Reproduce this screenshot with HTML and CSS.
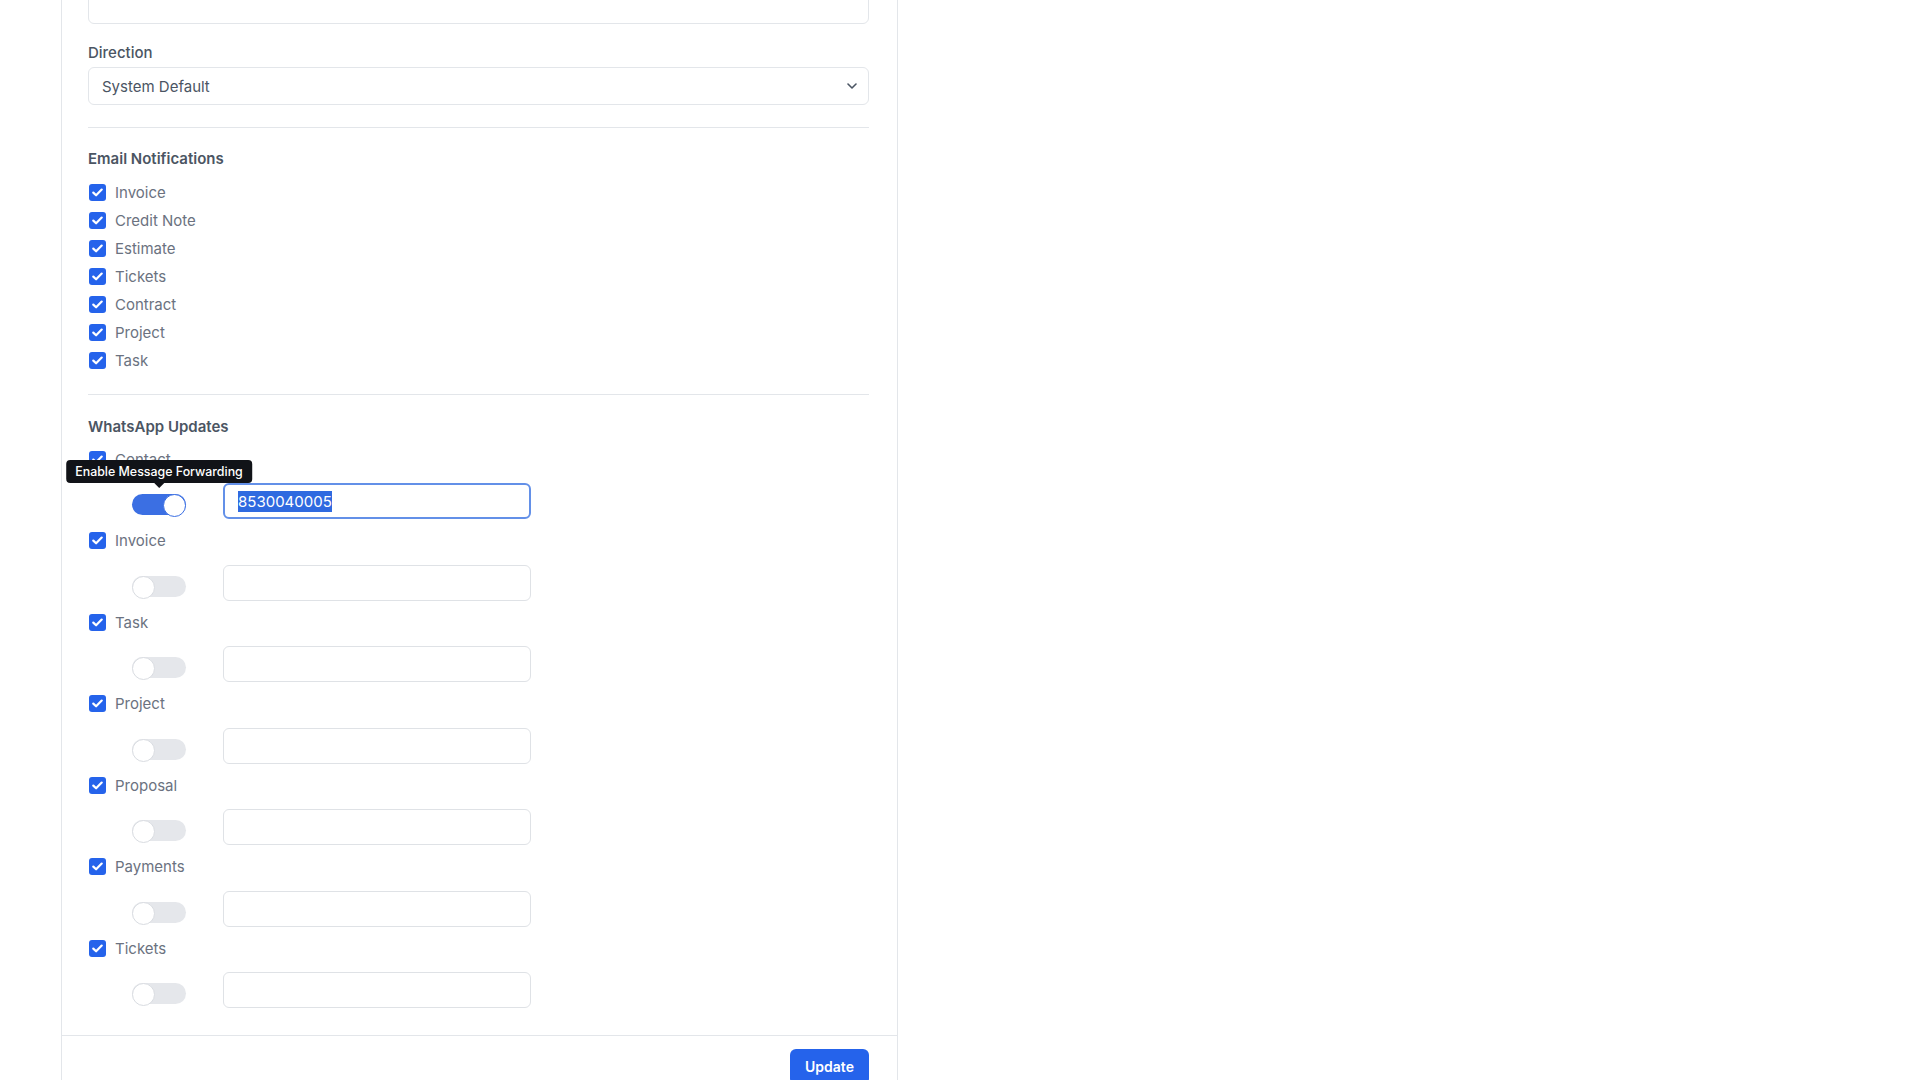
FILE: index.html
```html
<!DOCTYPE html>
<html lang="en">
<head>
    <meta charset="UTF-8">
    <meta name="viewport" content="width=device-width, initial-scale=1.0">
    <title>Profile Settings</title>
    <link rel="stylesheet" href="styles.css">
</head>
<body>
    <div class="page">
        <div class="panel">
            <div class="panel-body">
                <!-- field above, scrolled out of view -->
                <div class="form-group">
                    <div class="form-control"></div>
                </div>

                <div class="form-group">
                    <label class="control-label">Direction</label>
                    <div class="form-control select">
                        <span>System Default</span>
                        <svg class="chevron" width="10" height="6" viewBox="0 0 10 6"><path d="M1 1l4 4 4-4" fill="none" stroke="#4b5563" stroke-width="1.6" stroke-linecap="round" stroke-linejoin="round"/></svg>
                    </div>
                </div>

                <hr>

                <h4 class="section-title">Email Notifications</h4>
                <div class="check-list">
                    <div class="check"><span class="box"><svg width="11" height="9" viewBox="0 0 11 9"><path d="M1.3 4.6l2.8 2.7L9.7 1.6" fill="none" stroke="#fff" stroke-width="2.2" stroke-linecap="round" stroke-linejoin="round"/></svg></span>Invoice</div>
                    <div class="check"><span class="box"><svg width="11" height="9" viewBox="0 0 11 9"><path d="M1.3 4.6l2.8 2.7L9.7 1.6" fill="none" stroke="#fff" stroke-width="2.2" stroke-linecap="round" stroke-linejoin="round"/></svg></span>Credit Note</div>
                    <div class="check"><span class="box"><svg width="11" height="9" viewBox="0 0 11 9"><path d="M1.3 4.6l2.8 2.7L9.7 1.6" fill="none" stroke="#fff" stroke-width="2.2" stroke-linecap="round" stroke-linejoin="round"/></svg></span>Estimate</div>
                    <div class="check"><span class="box"><svg width="11" height="9" viewBox="0 0 11 9"><path d="M1.3 4.6l2.8 2.7L9.7 1.6" fill="none" stroke="#fff" stroke-width="2.2" stroke-linecap="round" stroke-linejoin="round"/></svg></span>Tickets</div>
                    <div class="check"><span class="box"><svg width="11" height="9" viewBox="0 0 11 9"><path d="M1.3 4.6l2.8 2.7L9.7 1.6" fill="none" stroke="#fff" stroke-width="2.2" stroke-linecap="round" stroke-linejoin="round"/></svg></span>Contract</div>
                    <div class="check"><span class="box"><svg width="11" height="9" viewBox="0 0 11 9"><path d="M1.3 4.6l2.8 2.7L9.7 1.6" fill="none" stroke="#fff" stroke-width="2.2" stroke-linecap="round" stroke-linejoin="round"/></svg></span>Project</div>
                    <div class="check"><span class="box"><svg width="11" height="9" viewBox="0 0 11 9"><path d="M1.3 4.6l2.8 2.7L9.7 1.6" fill="none" stroke="#fff" stroke-width="2.2" stroke-linecap="round" stroke-linejoin="round"/></svg></span>Task</div>
                </div>

                <hr class="hr-tight">

                <h4 class="section-title wa-title">WhatsApp Updates</h4>
                <div class="wa-list">
                    <div class="wa-item">
                        <div class="check"><span class="box"><svg width="11" height="9" viewBox="0 0 11 9"><path d="M1.3 4.6l2.8 2.7L9.7 1.6" fill="none" stroke="#fff" stroke-width="2.2" stroke-linecap="round" stroke-linejoin="round"/></svg></span>Contact</div>
                        <div class="forward-row">
                            <span class="switch on">
                                <span class="tooltip">Enable Message Forwarding</span>
                            </span>
                            <div class="phone-input focused"><span class="selected">8530040005</span></div>
                        </div>
                    </div>
                    <div class="wa-item">
                        <div class="check"><span class="box"><svg width="11" height="9" viewBox="0 0 11 9"><path d="M1.3 4.6l2.8 2.7L9.7 1.6" fill="none" stroke="#fff" stroke-width="2.2" stroke-linecap="round" stroke-linejoin="round"/></svg></span>Invoice</div>
                        <div class="forward-row">
                            <span class="switch"></span>
                            <div class="phone-input"></div>
                        </div>
                    </div>
                    <div class="wa-item">
                        <div class="check"><span class="box"><svg width="11" height="9" viewBox="0 0 11 9"><path d="M1.3 4.6l2.8 2.7L9.7 1.6" fill="none" stroke="#fff" stroke-width="2.2" stroke-linecap="round" stroke-linejoin="round"/></svg></span>Task</div>
                        <div class="forward-row">
                            <span class="switch"></span>
                            <div class="phone-input"></div>
                        </div>
                    </div>
                    <div class="wa-item">
                        <div class="check"><span class="box"><svg width="11" height="9" viewBox="0 0 11 9"><path d="M1.3 4.6l2.8 2.7L9.7 1.6" fill="none" stroke="#fff" stroke-width="2.2" stroke-linecap="round" stroke-linejoin="round"/></svg></span>Project</div>
                        <div class="forward-row">
                            <span class="switch"></span>
                            <div class="phone-input"></div>
                        </div>
                    </div>
                    <div class="wa-item">
                        <div class="check"><span class="box"><svg width="11" height="9" viewBox="0 0 11 9"><path d="M1.3 4.6l2.8 2.7L9.7 1.6" fill="none" stroke="#fff" stroke-width="2.2" stroke-linecap="round" stroke-linejoin="round"/></svg></span>Proposal</div>
                        <div class="forward-row">
                            <span class="switch"></span>
                            <div class="phone-input"></div>
                        </div>
                    </div>
                    <div class="wa-item">
                        <div class="check"><span class="box"><svg width="11" height="9" viewBox="0 0 11 9"><path d="M1.3 4.6l2.8 2.7L9.7 1.6" fill="none" stroke="#fff" stroke-width="2.2" stroke-linecap="round" stroke-linejoin="round"/></svg></span>Payments</div>
                        <div class="forward-row">
                            <span class="switch"></span>
                            <div class="phone-input"></div>
                        </div>
                    </div>
                    <div class="wa-item">
                        <div class="check"><span class="box"><svg width="11" height="9" viewBox="0 0 11 9"><path d="M1.3 4.6l2.8 2.7L9.7 1.6" fill="none" stroke="#fff" stroke-width="2.2" stroke-linecap="round" stroke-linejoin="round"/></svg></span>Tickets</div>
                        <div class="forward-row">
                            <span class="switch"></span>
                            <div class="phone-input"></div>
                        </div>
                    </div>
                </div>
            </div>

            <div class="panel-footer">
                <button type="submit" class="btn-primary">Update</button>
            </div>
        </div>
    </div>
</body>
</html>
```

FILE: styles.css
```css
/* base */
:root {
    --blue: #2563eb;
    --border: #e3e6ea;
    --text: #6b7280;
    --heading: #4b5563;
}

* {
    box-sizing: border-box;
}

body {
    margin: 0;
    font-family: Inter, 'Noto Sans', sans-serif;
    font-size: 15px;
    color: var(--text);
    background: #fff;
    overflow: hidden;
}

.page {
    padding-left: 61px;
}

/* panel */
.panel {
    width: 837px;
    margin-top: -40px;
    border: 1px solid var(--border);
    border-radius: 6px;
    background: #fff;
}

.panel-body {
    padding: 25px 28px 19px 26px;
}

.panel-footer {
    border-top: 1px solid var(--border);
    padding: 13px 28px 20px 26px;
    display: flex;
    justify-content: flex-end;
}

/* form fields */
.form-group {
    margin-bottom: 19px;
}

.form-group:last-of-type {
    margin-bottom: 0;
}

.control-label {
    display: block;
    line-height: 20px;
    margin-bottom: 4px;
    font-weight: 500;
    color: var(--heading);
}

.form-control {
    height: 38px;
    border: 1px solid var(--border);
    border-radius: 6px;
    background: #fff;
}

.select {
    display: flex;
    align-items: center;
    justify-content: space-between;
    padding: 0 11px 0 13px;
    color: var(--heading);
}

hr {
    border: 0;
    border-top: 1px solid var(--border);
    margin: 22px 0 0;
}

.hr-tight {
    margin-top: 20px;
}

.section-title {
    margin: 20px 0 8px;
    line-height: 22px;
    font-size: 15px;
    font-weight: 600;
    color: var(--heading);
}

.wa-title {
    margin: 21px 0 7px;
}

/* checkboxes */
.check {
    display: flex;
    align-items: center;
    gap: 9px;
    height: 28px;
    padding-left: 1px;
    color: var(--text);
}

.box {
    width: 17px;
    height: 17px;
    border-radius: 3px;
    background: var(--blue);
    display: flex;
    align-items: center;
    justify-content: center;
}

/* whatsapp rows */
.wa-item {
    padding-bottom: 7.5px;
}

.forward-row {
    display: flex;
    align-items: flex-start;
    gap: 37px;
    margin-top: 10px;
    padding-left: 44px;
}

.switch {
    position: relative;
    width: 54px;
    height: 21px;
    margin-top: 11px;
    border-radius: 11px;
    background: #e5e7eb;
    flex-shrink: 0;
}

.switch::after {
    content: '';
    position: absolute;
    top: 0;
    left: 0;
    width: 21px;
    height: 21px;
    border-radius: 50%;
    background: #fff;
    border: 1px solid #d9dce1;
}

.switch.on {
    background: #3b6fe3;
}

.switch.on::after {
    left: auto;
    right: 0;
    border-color: #3b6fe3;
}

.tooltip {
    position: absolute;
    bottom: calc(100% + 11px);
    left: 50%;
    transform: translateX(-50%);
    height: 23px;
    padding: 0 9px;
    display: flex;
    align-items: center;
    white-space: nowrap;
    background: #111318;
    color: #fff;
    font-size: 12.4px;
    font-weight: 500;
    border-radius: 4px;
    z-index: 2;
}

.tooltip::after {
    content: '';
    position: absolute;
    top: 100%;
    left: 50%;
    margin-left: -5px;
    border: 5px solid transparent;
    border-top-color: #111318;
    border-bottom: 0;
}

.phone-input {
    width: 308px;
    height: 36px;
    border: 1px solid #dfe2e6;
    border-radius: 6px;
    background: #fff;
    display: flex;
    align-items: center;
    padding-left: 14px;
    font-size: 15px;
    color: #111827;
}

.phone-input.focused {
    border: 2px solid #6390e8;
    padding-left: 13px;
}

.selected {
    background: #2f6ae0;
    color: #fff;
    line-height: 21px;
}

/* button */
.btn-primary {
    width: 79px;
    height: 36px;
    border: 0;
    border-radius: 6px;
    background: var(--blue);
    color: #fff;
    font-family: Inter, 'Noto Sans', sans-serif;
    font-size: 14px;
    font-weight: 600;
    cursor: pointer;
}
```
